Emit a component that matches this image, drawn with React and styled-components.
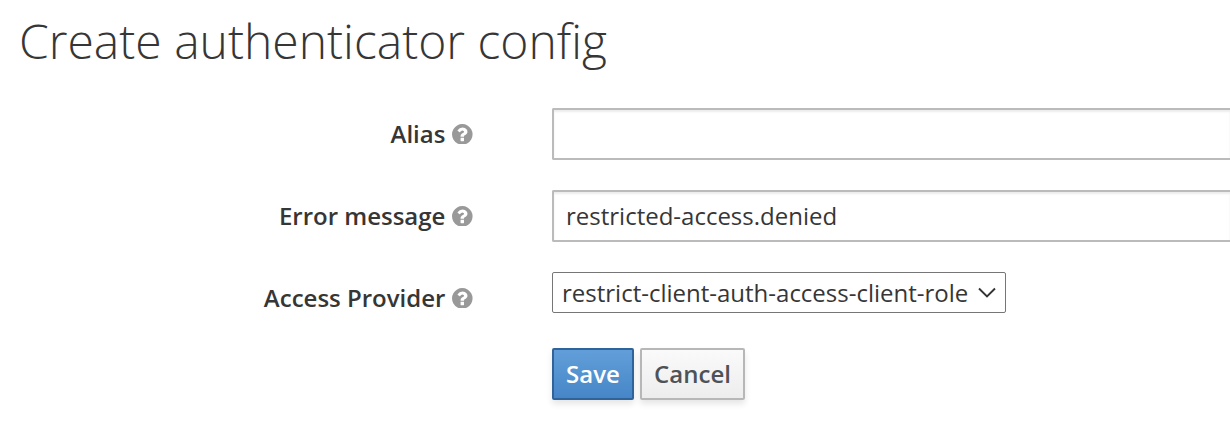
import React from 'react';
import styled, { createGlobalStyle } from 'styled-components';

const GlobalStyle = createGlobalStyle`
  *, *::before, *::after { box-sizing: border-box; }
  body {
    margin: 0;
    background: #fff;
    color: #363636;
    font-family: "Open Sans", "Liberation Sans", sans-serif;
    font-size: 24px;
  }
`;

const Page = styled.main`
  height: 439px;
  padding: 8px 0 0 20px;
`;

const Title = styled.h1`
  margin: 0 0 0 -1px;
  height: 67px;
  line-height: 66px;
  font-size: 48px;
  font-weight: 300;
`;

const Form = styled.form`
  display: flex;
  flex-direction: column;
  gap: 30px;
  padding-top: 33px;
`;

const Row = styled.div`
  display: grid;
  grid-template-columns: 452.6px 1fr;
  column-gap: 79.4px;
  height: 52px;
`;

const Label = styled.label`
  display: flex;
  justify-content: flex-end;
  align-items: center;
  gap: 6.6px;
  height: 52px;
  font-weight: 600;
  white-space: nowrap;
`;

const LabelText = styled.span`
  padding-bottom: 2px;
`;

const HelpSvg = styled.svg`
  display: block;
  width: 20.6px;
  height: 20.6px;
  flex: none;
`;

const TextInput = styled.input`
  width: 100%;
  height: 52px;
  padding: 0 12px 2px;
  border: 2px solid #bbb;
  border-right: 0;
  border-radius: 2px 0 0 2px;
  box-shadow: inset 0 2px 2px rgba(3, 3, 3, 0.075);
  font: inherit;
  color: #363636;
  outline: none;
`;

const SelectBox = styled.button`
  display: flex;
  align-items: center;
  justify-content: space-between;
  width: 454px;
  height: 41px;
  padding: 0 9px;
  border: 1px solid #767676;
  border-radius: 2px;
  background: #fff;
  font: inherit;
  color: #363636;
  white-space: nowrap;
`;

const Actions = styled.div`
  display: flex;
  gap: 6px;
  padding-left: 532px;
  margin-top: -6px;
`;

const Button = styled.button`
  width: ${(p) => p.$width}px;
  height: 52px;
  padding: 0 0 2px;
  border: 2px solid ${(p) => (p.$primary ? '#2f6399' : '#b7b7b7')};
  border-radius: 2px;
  background: ${(p) => (p.$primary ? 'linear-gradient(#629fd9, #4686c8)' : 'linear-gradient(#fafafa, #ededed)')};
  box-shadow: 0 4px 6px rgba(3, 3, 3, 0.1);
  color: ${(p) => (p.$primary ? '#fff' : '#4d5258')};
  font: inherit;
  font-weight: 600;
`;

function Help() {
  return (
    <HelpSvg viewBox="0 0 1536 1536" aria-hidden="true">
      <path fill="#999" d="M896 1248v-192q0-14-9-23t-23-9H672q-14 0-23 9t-9 23v192q0 14 9 23t23 9h192q14 0 23-9t9-23zm256-672q0-88-55.500-163T958 297t-170-41q-243 0-371 213-15 24 8 42l132 100q7 6 19 6 16 0 25-12 53-68 86-92 34-24 86-24 48 0 85.500 26t37.500 59q0 38-20 61t-68 45q-63 28-115.500 86.500T640 892v36q0 14 9 23t23 9h192q14 0 23-9t9-23q0-19 21.500-49.500T972 829q32-18 49-28.500t46-35 44.500-48 28-60.500 12.500-81zm384 192q0 209-103 385.500T1153.500 1433 768 1536t-385.500-103T103 1153.500 0 768t103-385.500T382.500 103 768 0t385.500 103T1433 382.500 1536 768z" />
    </HelpSvg>
  );
}

export default function App() {
  return (
    <>
      <GlobalStyle />
      <Page>
        <Title>Create authenticator config</Title>
        <Form onSubmit={(e) => e.preventDefault()}>
          <Row>
            <Label htmlFor="alias"><LabelText>Alias</LabelText><Help /></Label>
            <TextInput id="alias" />
          </Row>
          <Row>
            <Label htmlFor="error"><LabelText>Error message</LabelText><Help /></Label>
            <TextInput id="error" defaultValue="restricted-access.denied" />
          </Row>
          <Row>
            <Label htmlFor="provider"><LabelText>Access Provider</LabelText><Help /></Label>
            <SelectBox id="provider" type="button">
              restrict-client-auth-access-client-role
              <svg width="18" height="12" viewBox="0 0 18 12" fill="none" stroke="#333" strokeWidth="1.9">
                <path d="M1 1.500l8 8 8-8" />
              </svg>
            </SelectBox>
          </Row>
          <Actions>
            <Button type="submit" $primary $width={82}>Save</Button>
            <Button type="button" $width={105}>Cancel</Button>
          </Actions>
        </Form>
      </Page>
    </>
  );
}
